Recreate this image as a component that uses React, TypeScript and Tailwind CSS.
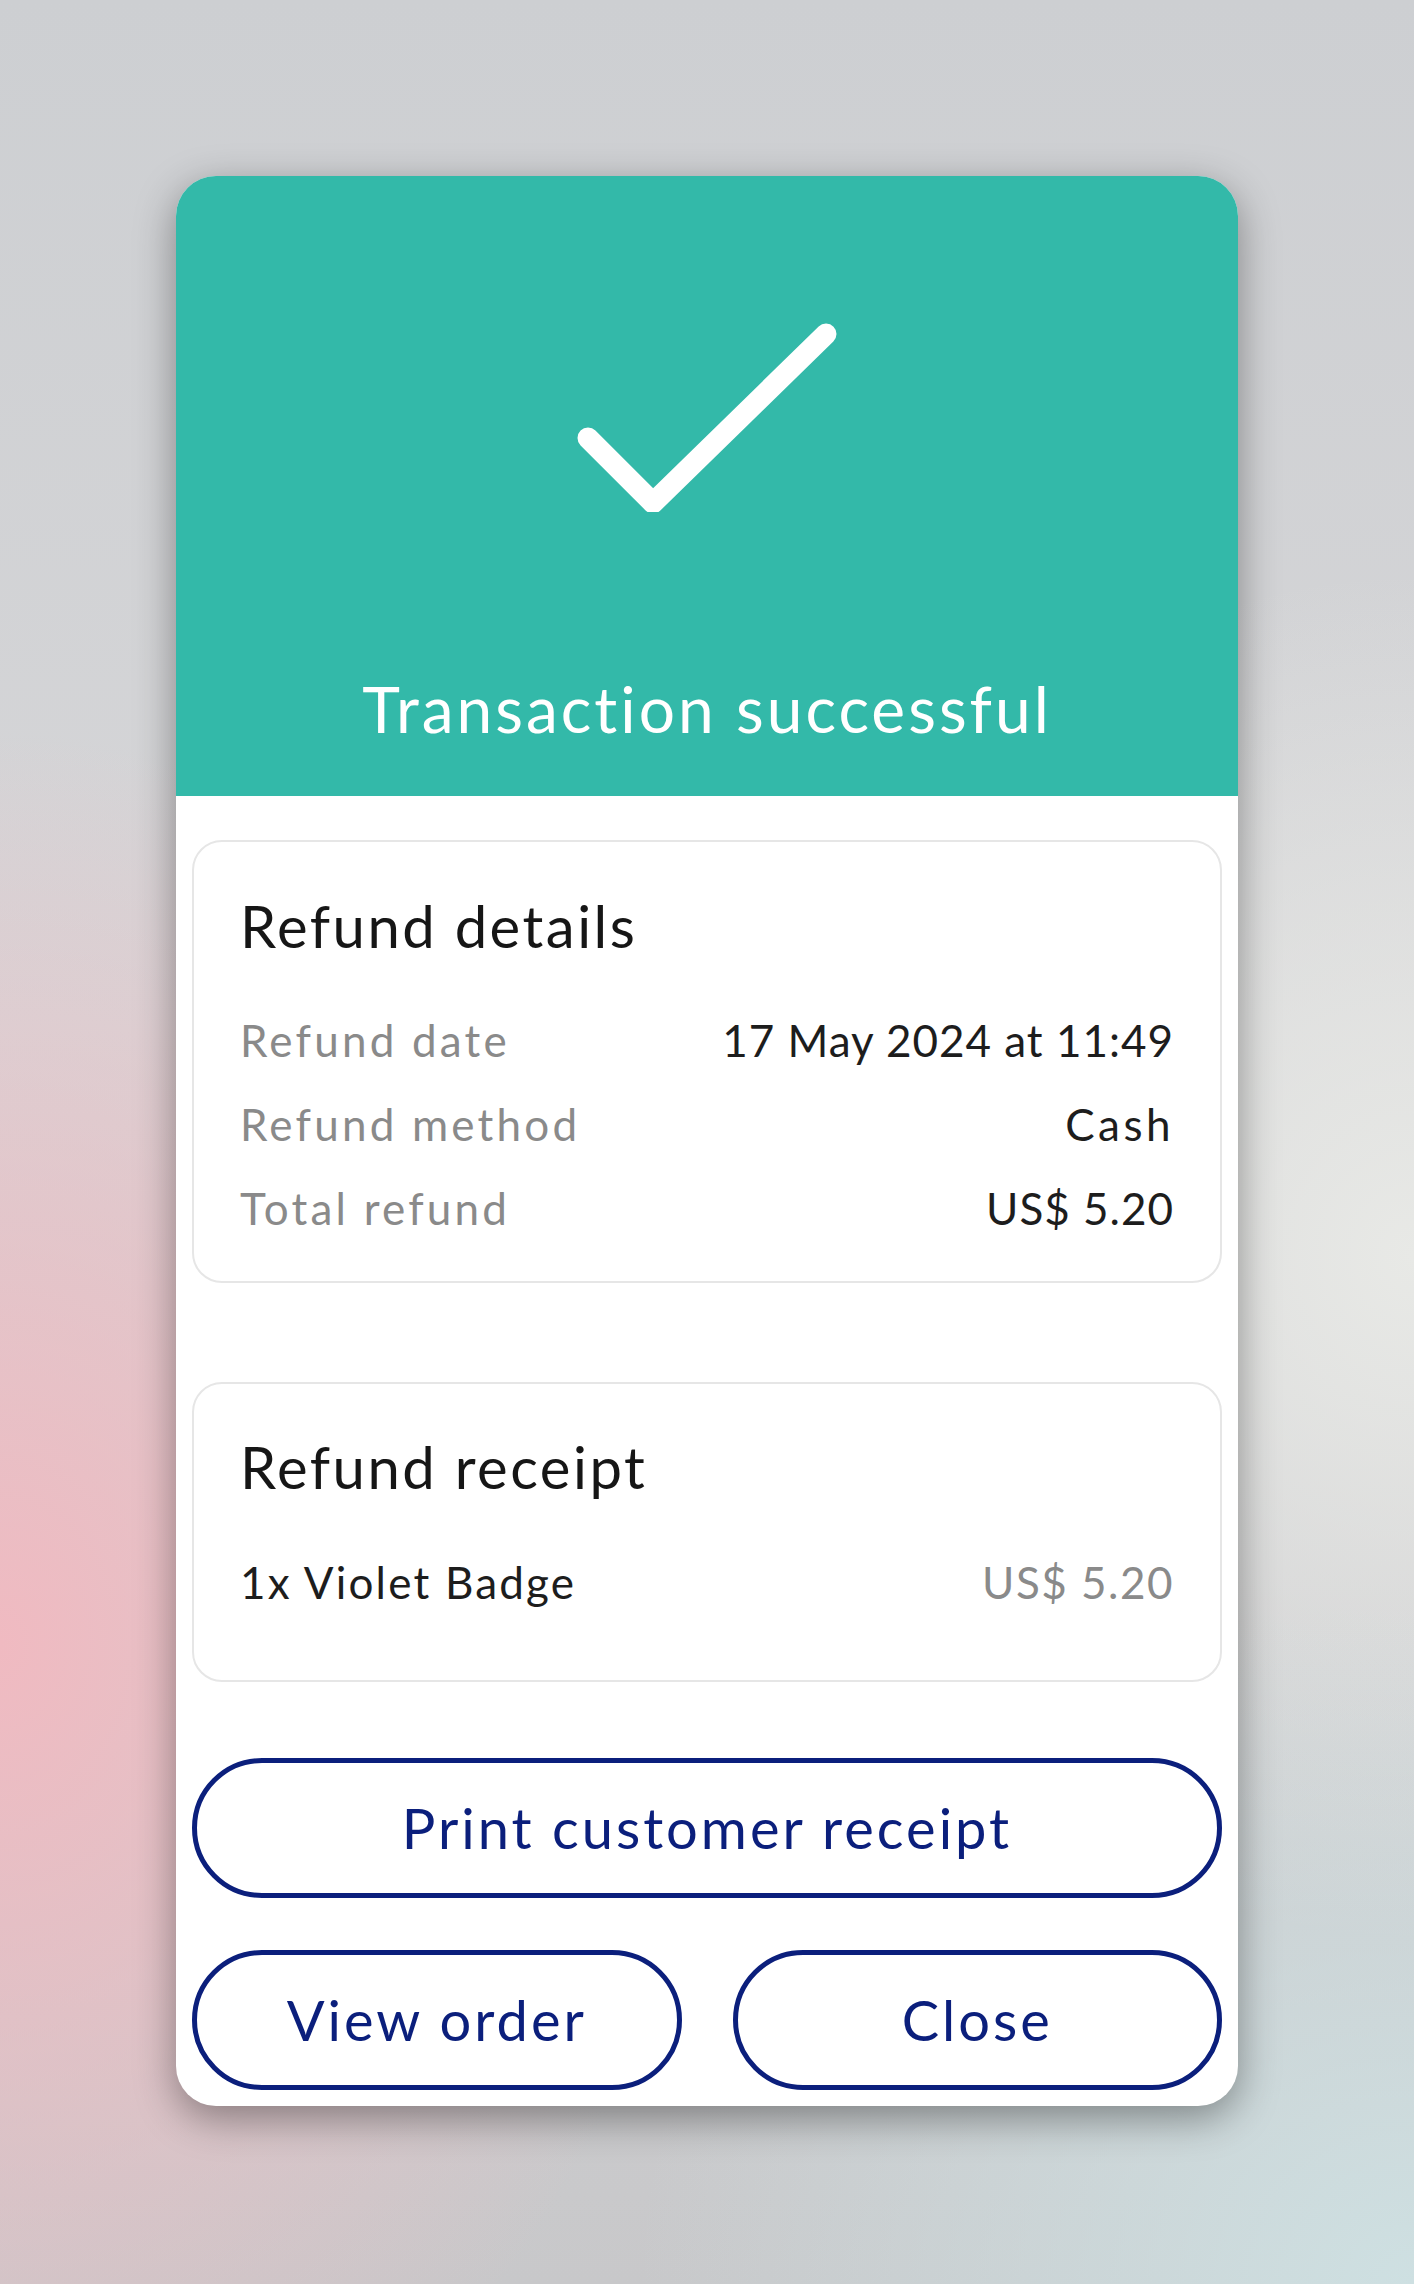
import React from "react";

const font = { fontFamily: "Lato, 'Noto Sans', sans-serif" };

const DetailRow: React.FC<{ label: string; value: string; wide?: boolean }> = ({ label, value, wide }) => (
  <div className="flex h-[84px] items-center justify-between text-[44px]">
    <span className="tracking-[3.2px] text-[#8a8a8a]">{label}</span>
    <span className={wide ? "tracking-[3.5px] text-[#1d1d1d]" : "tracking-[1px] text-[#1d1d1d]"}>{value}</span>
  </div>
);

const App: React.FC = () => {
  return (
    <div
      className="flex h-[2284px] w-full justify-center bg-[radial-gradient(ellipse_50%_40%_at_0%_72%,rgba(240,186,193,1),rgba(240,186,193,0)),radial-gradient(ellipse_55%_30%_at_100%_100%,rgba(206,224,226,1),rgba(206,224,226,0)),radial-gradient(ellipse_45%_30%_at_100%_55%,rgba(232,233,230,1),rgba(232,233,230,0)),linear-gradient(to_bottom,#cdcfd2_0%,#d6d6d8_45%,#c8c8ca_100%)]"
      style={font}
    >
      <div className="mt-[176px] flex h-[1930px] w-[1062px] flex-col overflow-hidden rounded-[40px] bg-white shadow-[0_12px_40px_rgba(0,0,0,0.38)]">
        {/* header */}
        <div className="flex h-[620px] flex-col items-center bg-[#33b9a9] pt-[146px]">
          <svg width="260" height="190" viewBox="0 0 260 190" fill="none">
            <polyline
              points="11,116 76,181 249,12"
              stroke="white"
              strokeWidth="21"
              strokeLinecap="round"
              strokeLinejoin="round"
            />
          </svg>
          <h1 className="mt-[157px] text-[64px] leading-[80px] tracking-[3px] text-white">
            Transaction successful
          </h1>
        </div>

        {/* content */}
        <div className="flex flex-1 flex-col px-4 pt-[44px] pb-[15px]">
          <div className="rounded-[30px] border-2 border-[#e6e6e6] px-[46px] pt-[48px] pb-[31px]">
            <h2 className="text-[58px] leading-[72px] tracking-[2.5px] text-[#161616]">Refund details</h2>
            <div className="mt-[36px]">
              <DetailRow label="Refund date" value="17 May 2024 at 11:49" />
              <DetailRow label="Refund method" value="Cash" wide />
              <DetailRow label="Total refund" value="US$ 5.20" />
            </div>
          </div>

          <div className="mt-[99px] rounded-[30px] border-2 border-[#e6e6e6] px-[46px] pt-[47px] pb-[56px]">
            <h2 className="text-[58px] leading-[72px] tracking-[2.5px] text-[#161616]">Refund receipt</h2>
            <div className="mt-[37px] flex h-[84px] items-center justify-between text-[44px]">
              <span className="tracking-[2.2px] text-[#1d1d1d]">1x Violet Badge</span>
              <span className="tracking-[1.5px] text-[#8a8a8a]">US$ 5.20</span>
            </div>
          </div>

          <button className="mt-[76px] h-[140px] w-full rounded-full border-[5px] border-[#0b1f7c] text-[56px] tracking-[3px] text-[#0b1f7c]">
            Print customer receipt
          </button>

          <div className="mt-[52px] grid grid-cols-2 gap-[51px]">
            <button className="h-[140px] rounded-full border-[5px] border-[#0b1f7c] text-[56px] tracking-[3px] text-[#0b1f7c]">
              View order
            </button>
            <button className="h-[140px] rounded-full border-[5px] border-[#0b1f7c] text-[56px] tracking-[3px] text-[#0b1f7c]">
              Close
            </button>
          </div>
        </div>
      </div>
    </div>
  );
};

export default App;
